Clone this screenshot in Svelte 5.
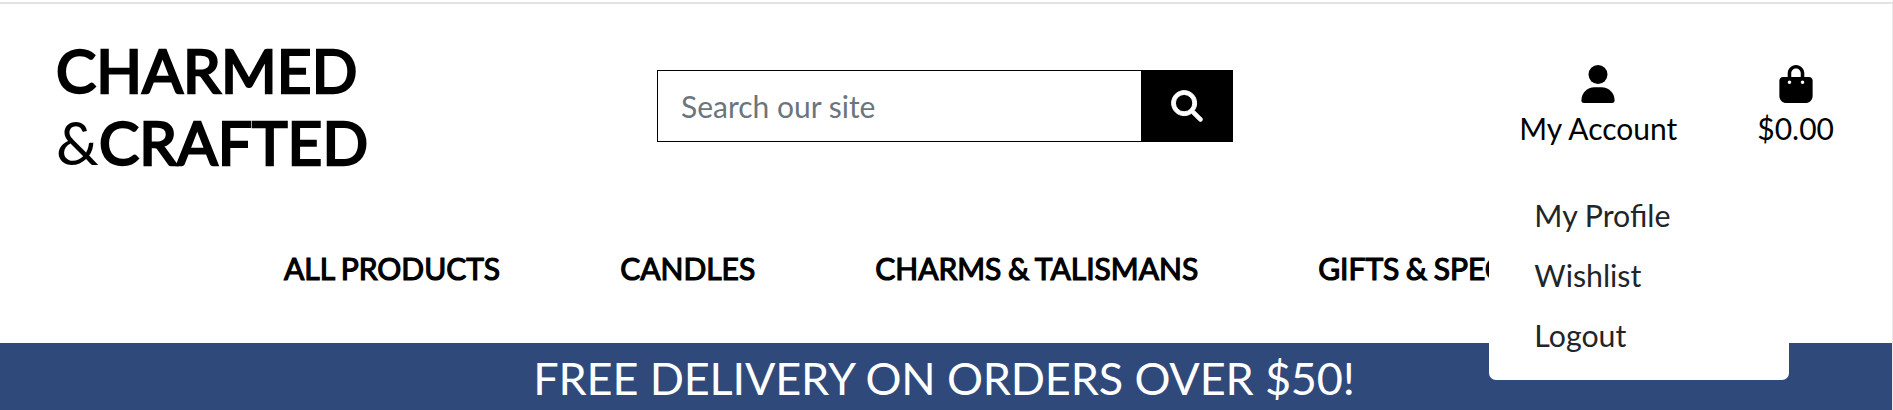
<script>
  const links = ['ALL PRODUCTS', 'CANDLES', 'CHARMS & TALISMANS', 'GIFTS & SPECIALS'];
  const accountMenu = ['My Profile', 'Wishlist', 'Logout'];
</script>

<div class="page">
  <header>
    <a class="logo" href="#home"><strong>CHARMED</strong><br />&amp;<strong>CRAFTED</strong></a>
    <form class="search">
      <input type="text" placeholder="Search our site" aria-label="Search our site" />
      <button type="button" aria-label="Search">
        <svg width="32" height="32" viewBox="-10 -10 532 532" fill="currentColor" stroke="currentColor" stroke-width="16"><path d="M416 208c0 45.900-14.900 88.300-40 122.700L502.600 457.400c12.500 12.500 12.500 32.800 0 45.300s-32.800 12.500-45.300 0L330.700 376c-34.400 25.200-76.800 40-122.700 40C93.100 416 0 322.900 0 208S93.100 0 208 0S416 93.100 416 208zM208 352a144 144 0 1 0 0-288 144 144 0 1 0 0 288z" /></svg>
      </button>
    </form>
    <div class="tools">
      <div class="account">
        <a class="tool" href="#account">
          <svg width="34" height="38" viewBox="0 0 34 38" fill="currentColor"><circle cx="17" cy="9.500" r="9.500" /><path d="M13.500 22.300h7C28 22.300 33.600 28.200 33.600 35.600c0 1.400-1 2.400-2.400 2.400H2.800C1.400 38 .4 37 .4 35.600.4 28.200 6 22.300 13.500 22.300z" /></svg>
          <span>My Account</span>
        </a>
        <div class="menu">
          {#each accountMenu as item}
            <a href="#menu">{item}</a>
          {/each}
        </div>
      </div>
      <a class="tool" href="#bag">
        <svg width="34" height="38" viewBox="0 0 448 512" fill="currentColor"><path d="M160 112c0-35.300 28.700-64 64-64s64 28.700 64 64v48H160V112zm-48 48H48c-26.500 0-48 21.500-48 48V416c0 53 43 96 96 96H352c53 0 96-43 96-96V208c0-26.500-21.500-48-48-48H336V112C336 50.100 285.900 0 224 0S112 50.100 112 112v48zm24 48a24 24 0 1 1 0 48 24 24 0 1 1 0-48zm152 24a24 24 0 1 1 48 0 24 24 0 1 1-48 0z" /></svg>
        <span>$0.00</span>
      </a>
    </div>
  </header>
  <nav>
    {#each links as link}
      <a href="#shop">{link}</a>
    {/each}
  </nav>
  <div class="banner">FREE DELIVERY ON ORDERS OVER $50!</div>
</div>

<style>
  :global(body) { margin: 0; overflow: hidden; }
  .page {
    box-sizing: border-box;
    height: 410px;
    display: flex;
    flex-direction: column;
    overflow: hidden;
    border-top: 2px solid #fff;
    border-right: 1px solid #e8e8e8;
    background: #fff;
    color: #000;
    font: 30px/45px Lato, sans-serif;
  }
  a { color: inherit; text-decoration: none; }
  header {
    height: 227px;
    flex: none;
    box-sizing: border-box;
    border-top: 2px solid #e2e2e2;
    display: grid;
    grid-template-columns: 657px 576px 1fr;
    align-items: start;
  }
  .logo {
    margin: 30px 0 0 56px;
    font-size: 60px;
    line-height: 72px;
    letter-spacing: 0.200px;
    white-space: nowrap;
  }
  .logo strong { font-weight: 400; -webkit-text-stroke: 2.500px currentColor; }
  .search {
    display: flex;
    height: 72px;
    margin-top: 66px;
  }
  input {
    box-sizing: border-box;
    flex: 1;
    min-width: 0;
    border: 1px solid #000;
    border-right: 0;
    border-radius: 0;
    padding: 0 23px;
    outline: 0;
    background: #fff;
    font: inherit;
  }
  input::placeholder { color: #6c757d; opacity: 1; }
  button {
    width: 92px;
    border: 0;
    padding: 0;
    background: #000;
    color: #fff;
    display: grid;
    place-items: center;
  }
  svg { display: block; }
  .tools {
    display: flex;
    justify-content: flex-end;
    gap: 80px;
    padding: 61px 58px 0 0;
  }
  .tool {
    display: flex;
    flex-direction: column;
    align-items: center;
    gap: 3px;
  }
  .account { position: relative; }
  .menu {
    position: absolute;
    z-index: 2;
    left: -30px;
    top: 100px;
    width: 300px;
    height: 215px;
    box-sizing: border-box;
    padding-top: 20px;
    border-radius: 7px;
    background: #fff;
    color: #212529;
    font-size: 30.300px;
  }
  .menu a { display: block; height: 60px; line-height: 60px; padding-left: 45px; }
  nav {
    flex: 1;
    display: flex;
    gap: 120px;
    padding: 17px 0 0 284px;
    white-space: nowrap;
    word-spacing: -1.200px;
    -webkit-text-stroke: 1.200px currentColor;
  }
  .banner {
    height: 67px;
    flex: none;
    padding-right: 4px;
    background: #2f4a7a;
    color: #fff;
    text-align: center;
    font-size: 45px;
    line-height: 70px;
    letter-spacing: -0.150px;
  }
</style>
